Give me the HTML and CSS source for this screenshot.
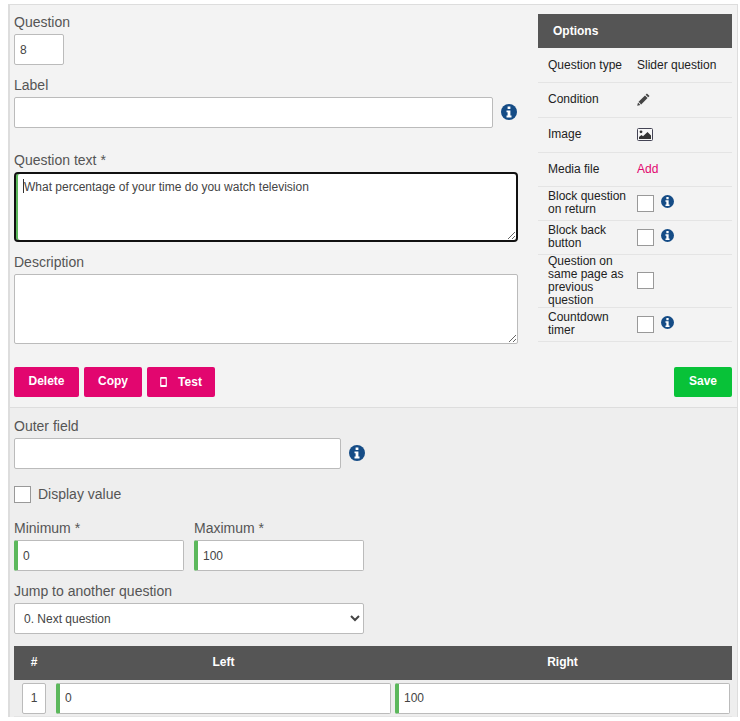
FILE: index.html
```html
<!DOCTYPE html>
<html lang="en">
<head>
<meta charset="utf-8">
<title>Question</title>
<link rel="stylesheet" href="styles.css">
</head>
<body>
<svg class="defs" width="0" height="0" aria-hidden="true">
  <symbol id="info" viewBox="0 0 16 16">
    <circle cx="8" cy="8" r="8" fill="#154c86"/>
    <path fill="#fff" d="M6.600 2.600h2.800v2.500H6.600zM5.500 6.400h3.900v5.200h1.100v2H5.500v-2h1.100V8.300H5.500z"/>
  </symbol>
</svg>
<main class="frame">
  <section class="top">
    <div class="main-col">
      <div class="field-label">Question</div>
      <input class="input num" type="text" value="8">
      <div class="field-label gap-20">Label</div>
      <div class="with-info">
        <input class="input label-input" type="text">
        <svg class="info big"><use href="#info"/></svg>
      </div>
      <div class="field-label gap-24">Question text *</div>
      <div class="ta-wrap">
        <textarea class="input area focused">What percentage of your time do you watch television</textarea>
        <span class="caret"></span>
      </div>
      <div class="field-label gap-12">Description</div>
      <textarea class="input area"></textarea>
      <div class="actions">
        <button class="btn pink w-del" type="button">Delete</button>
        <button class="btn pink w-copy" type="button">Copy</button>
        <button class="btn pink w-test" type="button">
          <svg class="phone" viewBox="0 0 8 12"><path fill="#fff" fill-rule="evenodd" d="M1.200 0h5.600C7.500 0 8 .5 8 1.200v9.600c0 .7-.5 1.200-1.200 1.200H1.200C.5 12 0 11.500 0 10.800V1.200C0 .5.500 0 1.200 0zM1.400 2v7.600h5.200V2z"/></svg>
          Test
        </button>
      </div>
    </div>
    <aside class="side">
      <h2 class="side-head">Options</h2>
      <div class="opt h35"><div class="opt-name flush">Question type</div><div>Slider question</div></div>
      <div class="opt h35"><div class="opt-name">Condition</div>
        <svg class="ico-pencil" viewBox="0 0 14 14"><path fill="#444" d="M10.700.5l2.800 2.800-1.400 1.400-2.800-2.800zM8.600 2.600l2.800 2.800-6.900 6.900-2.800-2.800zM1.100 10.300l2.600 2.600-3.500.9z"/></svg>
      </div>
      <div class="opt h35"><div class="opt-name">Image</div>
        <svg class="ico-image" viewBox="0 0 16 13"><rect x=".5" y=".5" width="15" height="12" rx="1" fill="#f7f7f7" stroke="#445"/><circle cx="4" cy="3.800" r="1.400" fill="#333"/><path fill="#333" d="M2 11V9l2.500-2 1.500 1.300L10.500 4 14 7.500V11z"/></svg>
      </div>
      <div class="opt h34"><div class="opt-name flush">Media file</div><a class="add">Add</a></div>
      <div class="opt h34"><div class="opt-name">Block question on return</div><span class="box"></span><svg class="info small"><use href="#info"/></svg></div>
      <div class="opt h34"><div class="opt-name">Block back button</div><span class="box"></span><svg class="info small"><use href="#info"/></svg></div>
      <div class="opt h53"><div class="opt-name flush">Question on same page as previous question</div><span class="box box-up"></span></div>
      <div class="opt h34"><div class="opt-name">Countdown timer</div><span class="box"></span><svg class="info small"><use href="#info"/></svg></div>
      <div class="save-row"><button class="btn green" type="button">Save</button></div>
    </aside>
  </section>
  <section class="bottom">
    <div class="field-label">Outer field</div>
    <div class="with-info">
      <input class="input outer" type="text">
      <svg class="info big"><use href="#info"/></svg>
    </div>
    <label class="check-row"><span class="box"></span><span class="field-label check-text">Display value</span></label>
    <div class="pair">
      <div class="pair-item">
        <div class="field-label">Minimum *</div>
        <input class="input req" type="text" value="0">
      </div>
      <div class="pair-item">
        <div class="field-label">Maximum *</div>
        <input class="input req" type="text" value="100">
      </div>
    </div>
    <div class="field-label gap-12">Jump to another question</div>
    <select class="input jump"><option>0. Next question</option></select>
    <div class="thead">
      <div class="th-num">#</div>
      <div class="th-col">Left</div>
      <div class="th-col">Right</div>
    </div>
    <div class="trow">
      <input class="input idx" type="text" value="1">
      <input class="input req cell" type="text" value="0">
      <input class="input req cell" type="text" value="100">
    </div>
  </section>
</main>
</body>
</html>
```
FILE: styles.css
```css
* { box-sizing: border-box; }
html, body { height: 100%; }
body {
  margin: 0;
  padding: 4px 2px 0 8px;
  background: #fff;
  overflow: hidden;
  font-family: "Liberation Sans", Arial, sans-serif;
  font-size: 12px;
  color: #222;
}
.defs { position: absolute; }
.frame {
  width: 730px;
  border: 1px solid #ddd;
  border-left-width: 2px;
  border-bottom: 0;
  background: #eee;
}
.top {
  display: flex;
  justify-content: space-between;
  padding: 9px 5px 10px 4px;
  height: 403px;
  background: #f3f3f3;
  border-bottom: 1px solid #ddd;
}
.main-col { width: 504px; position: relative; }
.field-label { font-size: 14px; line-height: 16px; color: #555; }
.gap-20 { margin-top: 12px; }
.gap-24 { margin-top: 24px; }
.gap-12 { margin-top: 12px; }
.input {
  display: block;
  height: 31px;
  margin: 0;
  padding: 0 5px;
  background: #fff;
  border: 1px solid #bbb;
  border-radius: 2px;
  font: 12px "Liberation Sans", Arial, sans-serif;
  color: #444;
  outline: none;
}
.num { width: 50px; margin-top: 4px; }
.with-info { display: flex; align-items: center; margin-top: 4px; }
.label-input { width: 479px; }
.info { display: block; flex: none; }
.info.big { width: 16px; height: 16px; margin: -1px 0 0 8px; }
.info.small { width: 13px; height: 13px; margin: -4px 0 0 7px; }
.ta-wrap { position: relative; margin-top: 4px; }
.area {
  width: 504px;
  height: 70px;
  padding: 6px 8px;
  line-height: 15px;
  margin-top: 4px;
}
.ta-wrap .area { margin-top: 0; }
.focused {
  border: 2px solid #111;
  border-radius: 4px;
  box-shadow: inset 2px 0 0 #5cb85c;
}
.caret {
  position: absolute;
  left: 9px;
  top: 7px;
  width: 1px;
  height: 14px;
  background: #333;
}
.actions { display: flex; gap: 5px; margin-top: 23px; }
.btn {
  height: 30px;
  padding: 0 0 2px;
  border: 0;
  border-radius: 2px;
  color: #fff;
  font: bold 12px "Liberation Sans", Arial, sans-serif;
}
.pink { background: #e2066f; }
.green { background: #08c238; width: 58px; }
.w-del { width: 65px; }
.w-copy { width: 58px; }
.w-test { width: 68px; display: flex; align-items: center; justify-content: center; gap: 11px; padding-bottom: 1px; }
.phone { width: 7px; height: 10px; margin-top: 1px; }
.side { width: 194px; }
.side-head {
  margin: 0;
  height: 34px;
  padding-left: 15px;
  background: #555;
  color: #fff;
  font-size: 12px;
  line-height: 34px;
}
.opt {
  display: flex;
  align-items: center;
  padding-left: 10px;
  border-bottom: 1px solid #e4e4e4;
  line-height: 13px;
  color: #222;
}
.h34 { height: 34px; }
.h35 { height: 35px; }
.h53 { height: 53px; }
.opt-name { width: 89px; flex: none; padding: 0 6px 2px 0; }
.opt-name.flush { padding-bottom: 0; }
.add { color: #e2066f; }
.ico-pencil { width: 13px; height: 13px; margin-bottom: 1px; }
.ico-image { width: 16px; height: 13px; margin-bottom: 1px; }
.box {
  display: block;
  flex: none;
  width: 17px;
  height: 17px;
  background: #fff;
  border: 1px solid #999;
}
.box-up { margin-bottom: 1px; }
.save-row { display: flex; justify-content: flex-end; margin-top: 25px; }
.bottom { padding: 10px 5px 0 4px; }
.outer { width: 327px; }
.check-row { display: flex; align-items: center; gap: 7px; margin-top: 17px; }
.check-text { margin-top: -1px; }
.pair { display: flex; gap: 10px; margin-top: 17px; }
.pair-item { width: 170px; }
.pair-item .input { width: 100%; margin-top: 4px; }
.req { padding-left: 5px; border-left: 4px solid #5cb85c; }
.jump { width: 350px; margin-top: 4px; padding-left: 5px; }
.thead {
  display: flex;
  height: 34px;
  margin-top: 12px;
  background: #555;
  color: #fff;
  font-weight: bold;
  line-height: 32px;
  text-align: center;
}
.th-num { width: 40px; }
.th-col { flex: 1; }
.trow {
  display: flex;
  gap: 4px;
  align-items: center;
  height: 37px;
  padding: 0 2px 0 8px;
  border-bottom: 1px solid #e4e4e4;
  background: #eee;
}
.idx { width: 24px; flex: none; text-align: center; padding: 0; margin-right: 6px; }
.cell { flex: 1; min-width: 0; }
```
